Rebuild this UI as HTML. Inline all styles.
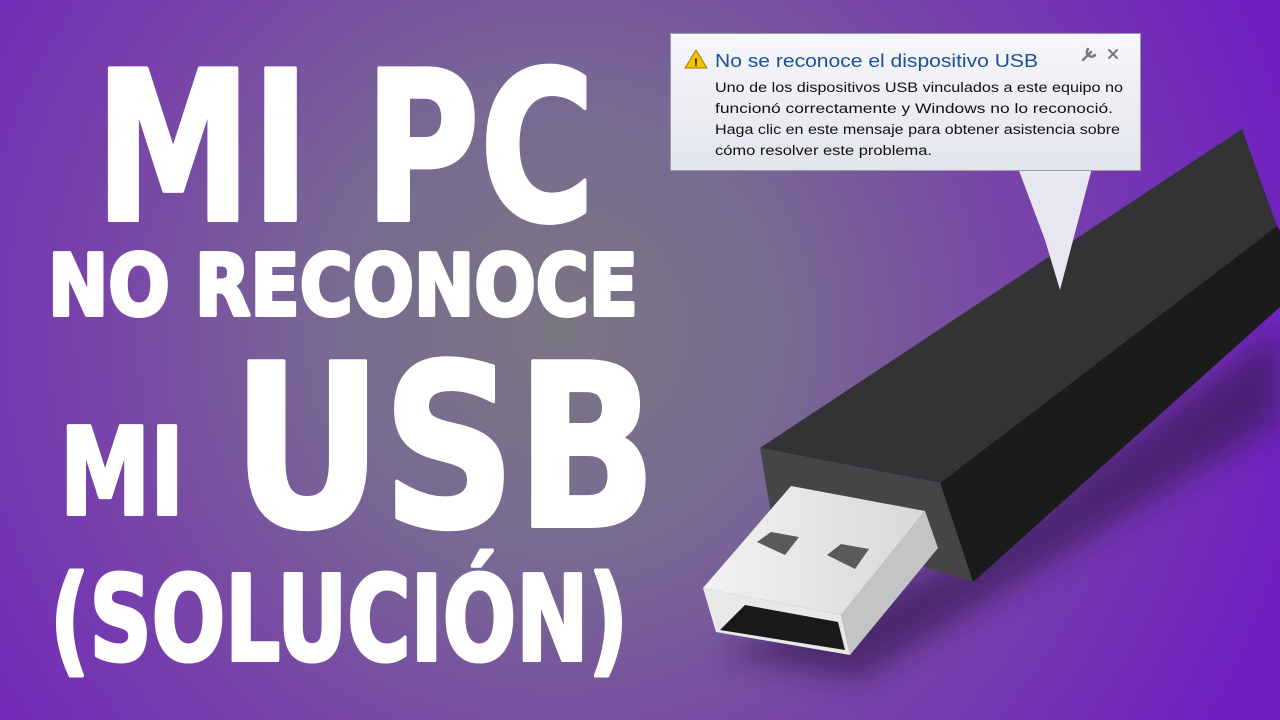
<!DOCTYPE html>
<html><head><meta charset="utf-8"><style>
html,body{margin:0;padding:0;width:1280px;height:720px;overflow:hidden;background:#7a5aa0}
svg{display:block}
</style></head><body>
<svg width="1280" height="720" viewBox="0 0 1280 720" xmlns="http://www.w3.org/2000/svg">
<defs>
<radialGradient id="bg" cx="560" cy="330" r="760" gradientUnits="userSpaceOnUse">
<stop offset="0" stop-color="#7a7682"/>
<stop offset="0.3" stop-color="#786a92"/>
<stop offset="0.6" stop-color="#7845a8"/>
<stop offset="1" stop-color="#7020c0"/>
</radialGradient>
<linearGradient id="dlg" x1="0" y1="0" x2="0" y2="1">
<stop offset="0" stop-color="#f6f7fa"/><stop offset="1" stop-color="#e2e5ec"/>
</linearGradient>
<linearGradient id="con" x1="0" y1="0" x2="1" y2="0">
<stop offset="0" stop-color="#f2f2f2"/><stop offset="1" stop-color="#d8d8d8"/>
</linearGradient>
<filter id="blur" x="-50%" y="-50%" width="200%" height="200%"><feGaussianBlur stdDeviation="14"/></filter>
</defs>
<rect width="1280" height="720" fill="url(#bg)"/>
<polygon points="720,655 860,680 1280,420 1280,330 960,560" fill="#3a1a5a" opacity="0.7" filter="url(#blur)"/>
<polygon points="760,448 1242,129 1277,226 940,483" fill="#333335"/>
<polygon points="940,483 1277,226 1280,230 1280,307 973,582" fill="#1b1b1c"/>
<polygon points="760,448 940,483 973,582 772,520" fill="#454547"/>
<polygon points="703,588 791,486 925,511 841,615" fill="url(#con)"/>
<polygon points="925,511 938,548 850,655 841,615" fill="#c4c4c4"/>
<polygon points="703,588 841,615 850,655 716,632" fill="#e8e8e8"/>
<polygon points="745,605 838,622 845,650 720,630" fill="#1a1a1a"/>
<polygon points="757,542 771,532 799,537 785,555" fill="#5a5a5a"/>
<polygon points="827,555 841,544 869,549 855,569" fill="#5a5a5a"/>
<polygon points="1018,168 1092,168 1060,290 1045,240" fill="#e6e7f0"/>
<rect x="670.5" y="33.5" width="470" height="137" fill="url(#dlg)" stroke="#9a9ca4"/>
<polygon points="696,50 707,68 685,68" fill="#f5c400" stroke="#a07800" stroke-width="1" stroke-linejoin="round"/>
<text x="696" y="66" font-family="Liberation Sans,sans-serif" font-size="11" font-weight="bold" text-anchor="middle" fill="#000">!</text>
<text x="715" y="67" font-family="Liberation Sans,sans-serif" font-size="18.5" fill="#1e4f99" textLength="323" lengthAdjust="spacingAndGlyphs">No se reconoce el dispositivo USB</text>
<path d="M1083,60 L1091,52 M1088,49 A4,4 0 1 0 1095,55" stroke="#7a7a7a" stroke-width="2.5" fill="none" stroke-linecap="round"/>
<path d="M1109,50 L1117,58 M1117,50 L1109,58" stroke="#777" stroke-width="2" stroke-linecap="round"/>
<g font-family="Liberation Sans,sans-serif" font-size="14.2" fill="#111">
<text x="715" y="92" textLength="408" lengthAdjust="spacingAndGlyphs">Uno de los dispositivos USB vinculados a este equipo no</text>
<text x="715" y="113" textLength="398" lengthAdjust="spacingAndGlyphs">funcionó correctamente y Windows no lo reconoció.</text>
<text x="715" y="134" textLength="405" lengthAdjust="spacingAndGlyphs">Haga clic en este mensaje para obtener asistencia sobre</text>
<text x="715" y="155" textLength="217" lengthAdjust="spacingAndGlyphs">cómo resolver este problema.</text>
</g>
<g font-family="DejaVu Sans,sans-serif" font-weight="bold" fill="#fff" stroke="#fff" stroke-width="4" stroke-linejoin="round">
<text x="95" y="220" font-size="208" textLength="500" lengthAdjust="spacingAndGlyphs">MI PC</text>
<text x="48" y="315" font-size="85" textLength="590" lengthAdjust="spacingAndGlyphs">NO RECONOCE</text>
<text x="60" y="514" font-size="120" textLength="124" lengthAdjust="spacingAndGlyphs">MI</text>
<text x="232" y="526" font-size="226" textLength="425" lengthAdjust="spacingAndGlyphs">USB</text>
<text x="50" y="660" font-size="118" textLength="578" lengthAdjust="spacingAndGlyphs">(SOLUCIÓN)</text>
</g>
</svg>
</body></html>
